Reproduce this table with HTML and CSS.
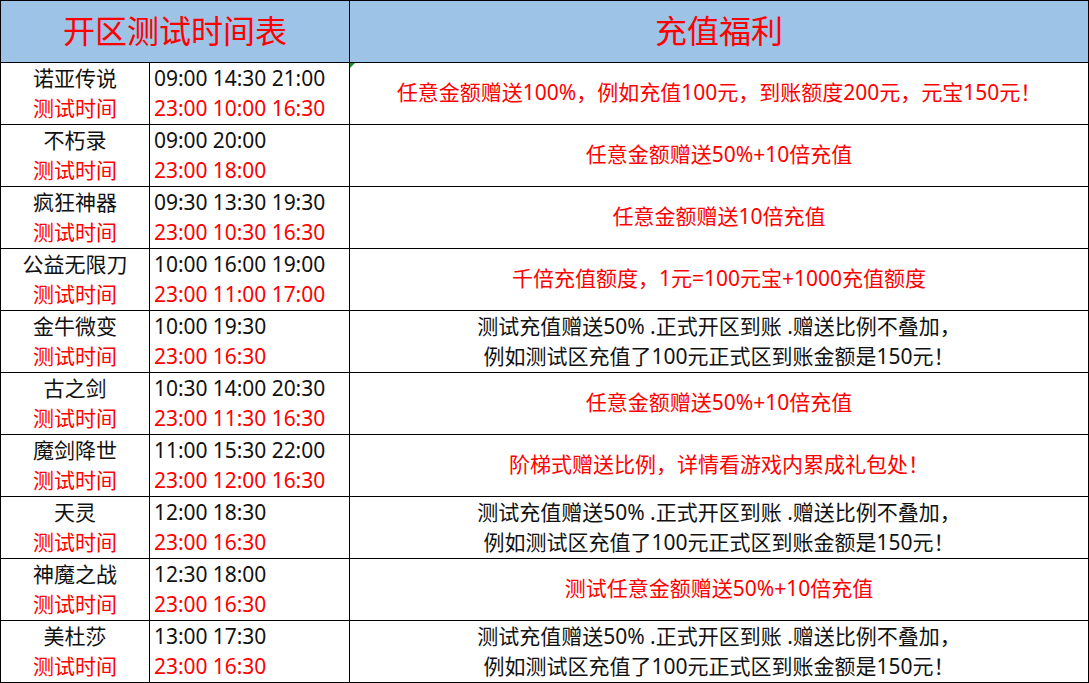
FILE: index.html
```html
<!DOCTYPE html>
<html lang="zh-CN">
<head>
<meta charset="utf-8">
<title>开区测试时间表</title>
<link rel="stylesheet" href="styles.css">
</head>
<body>
<table class="sheet">
  <colgroup>
    <col class="c-name">
    <col class="c-time">
    <col class="c-gift">
  </colgroup>
  <thead>
    <tr class="head">
      <th colspan="2">开区测试时间表</th>
      <th>充值福利</th>
    </tr>
  </thead>
  <tbody>
    <tr>
      <td class="name"><div>诺亚传说</div><div class="red">测试时间</div></td>
      <td class="time"><div>09:00 14:30 21:00</div><div class="red">23:00 10:00 16:30</div></td>
      <td class="gift one red mark">任意金额赠送100%，例如充值100元，到账额度200元，元宝150元！<span class="tri"></span></td>
    </tr>
    <tr>
      <td class="name"><div>不朽录</div><div class="red">测试时间</div></td>
      <td class="time"><div>09:00 20:00</div><div class="red">23:00 18:00</div></td>
      <td class="gift one red">任意金额赠送50%+10倍充值</td>
    </tr>
    <tr>
      <td class="name"><div>疯狂神器</div><div class="red">测试时间</div></td>
      <td class="time"><div>09:30 13:30 19:30</div><div class="red">23:00 10:30 16:30</div></td>
      <td class="gift one red">任意金额赠送10倍充值</td>
    </tr>
    <tr>
      <td class="name"><div>公益无限刀</div><div class="red">测试时间</div></td>
      <td class="time"><div>10:00 16:00 19:00</div><div class="red">23:00 11:00 17:00</div></td>
      <td class="gift one red">千倍充值额度，1元=100元宝+1000充值额度</td>
    </tr>
    <tr>
      <td class="name"><div>金牛微变</div><div class="red">测试时间</div></td>
      <td class="time"><div>10:00 19:30</div><div class="red">23:00 16:30</div></td>
      <td class="gift"><div>测试充值赠送50% .正式开区到账 .赠送比例不叠加，</div><div>例如测试区充值了100元正式区到账金额是150元！</div></td>
    </tr>
    <tr>
      <td class="name"><div>古之剑</div><div class="red">测试时间</div></td>
      <td class="time"><div>10:30 14:00 20:30</div><div class="red">23:00 11:30 16:30</div></td>
      <td class="gift one red">任意金额赠送50%+10倍充值</td>
    </tr>
    <tr>
      <td class="name"><div>魔剑降世</div><div class="red">测试时间</div></td>
      <td class="time"><div>11:00 15:30 22:00</div><div class="red">23:00 12:00 16:30</div></td>
      <td class="gift one red">阶梯式赠送比例，详情看游戏内累成礼包处！</td>
    </tr>
    <tr>
      <td class="name"><div>天灵</div><div class="red">测试时间</div></td>
      <td class="time"><div>12:00 18:30</div><div class="red">23:00 16:30</div></td>
      <td class="gift"><div>测试充值赠送50% .正式开区到账 .赠送比例不叠加，</div><div>例如测试区充值了100元正式区到账金额是150元！</div></td>
    </tr>
    <tr>
      <td class="name"><div>神魔之战</div><div class="red">测试时间</div></td>
      <td class="time"><div>12:30 18:00</div><div class="red">23:00 16:30</div></td>
      <td class="gift one red">测试任意金额赠送50%+10倍充值</td>
    </tr>
    <tr>
      <td class="name"><div>美杜莎</div><div class="red">测试时间</div></td>
      <td class="time"><div>13:00 17:30</div><div class="red">23:00 16:30</div></td>
      <td class="gift"><div>测试充值赠送50% .正式开区到账 .赠送比例不叠加，</div><div>例如测试区充值了100元正式区到账金额是150元！</div></td>
    </tr>
  </tbody>
</table>
</body>
</html>
```

FILE: styles.css
```css
html, body {
  margin: 0;
  padding: 0;
  background: #ffffff;
}

body {
  font-family: "Noto Sans", "Noto Sans CJK SC", sans-serif;
  color: #111111;
}

.sheet {
  border-collapse: collapse;
  table-layout: fixed;
  width: 1088px;
  margin-left: 0;
}

.c-name { width: 149px; }
.c-time { width: 200px; }
.c-gift { width: 739px; }

.sheet th,
.sheet td {
  border: 1px solid #000000;
  padding: 0;
  box-sizing: border-box;
}

.head th {
  height: 62px;
  background: #9dc3e6;
  color: #ff0000;
  font-weight: normal;
  font-size: 32px;
  line-height: 40px;
  text-align: center;
  vertical-align: middle;
  padding-bottom: 1px;
}

.sheet tbody tr {
  height: 62px;
}

.sheet td {
  font-size: 21px;
  line-height: 30px;
  vertical-align: middle;
  padding-bottom: 1px;
}

.name {
  text-align: center;
}

.sheet td.time {
  text-align: left;
  padding-left: 4px;
  letter-spacing: -0.05px;
}

.gift {
  text-align: center;
}

.sheet td.one {
  padding-bottom: 3px;
}

.red {
  color: #ff0000;
}

.mark {
  position: relative;
}

.tri {
  position: absolute;
  left: 0;
  top: 0;
  width: 0;
  height: 0;
  border-top: 5px solid #1e8a2e;
  border-right: 5px solid transparent;
}
```
